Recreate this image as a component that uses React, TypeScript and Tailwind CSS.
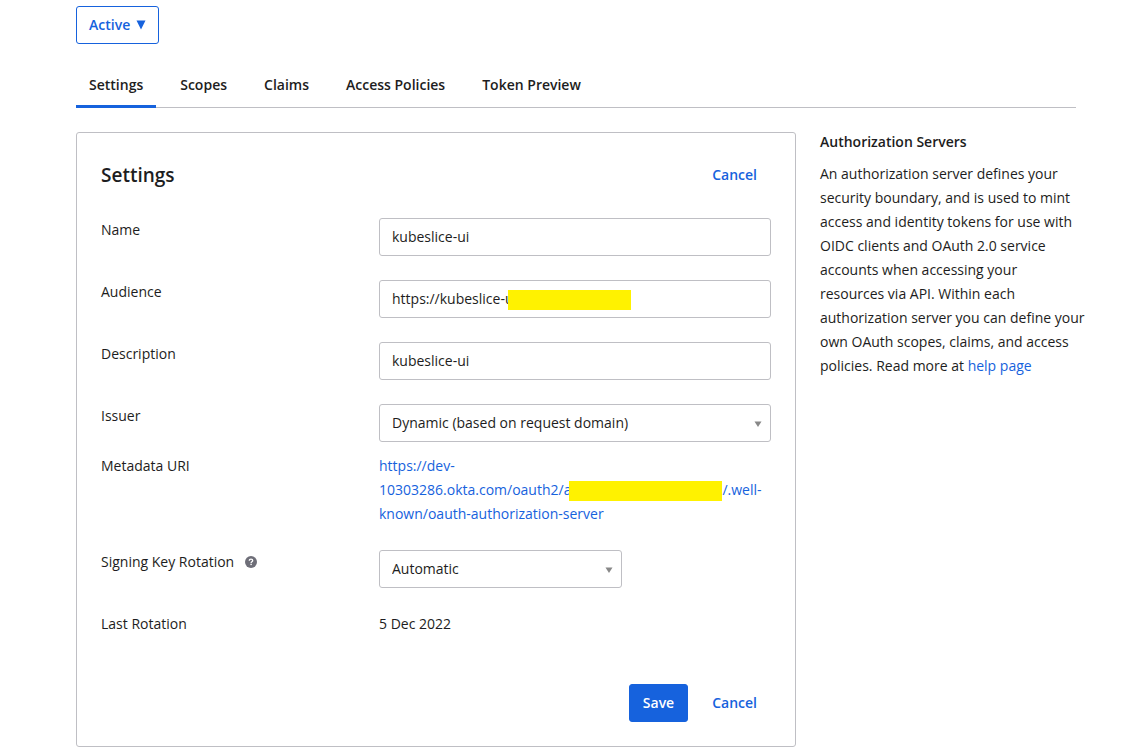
import { useState, type ReactNode } from 'react'

const TABS = ['Settings', 'Scopes', 'Claims', 'Access Policies', 'Token Preview']

const inputCls = 'block w-full h-[38px] rounded-[3px] border border-[#bfbfc4] bg-white px-3 text-sm text-[#1d1d21] outline-none focus:border-[#1662dd]'
const linkBtnCls = 'h-[38px] rounded-[3px] border border-transparent px-[13px] text-sm font-semibold text-[#1662dd] hover:underline'

function Row({ label, htmlFor, help, children }: { label: string; htmlFor?: string; help?: boolean; children: ReactNode }) {
  return (
    <div className="flex items-start">
      <div className="w-[278px] shrink-0 flex items-center gap-[11px] text-sm leading-6">
        {htmlFor ? <label htmlFor={htmlFor}>{label}</label> : <span>{label}</span>}
        {help && (
          <button type="button" aria-label="Help" className="shrink-0">
            <svg width="12" height="12" viewBox="0 0 12 12" className="block" aria-hidden="true">
              <circle cx="6" cy="6" r="6" fill="#6e6e78" />
              <path d="M4.3 4.7c0-1 .7-1.6 1.7-1.6s1.7.6 1.7 1.4c0 1.2-1.6 1.2-1.6 2.4" fill="none" stroke="#fff" strokeWidth="1.3" />
              <rect x="5.4" y="7.7" width="1.4" height="1.4" fill="#fff" />
            </svg>
          </button>
        )}
      </div>
      <div className="min-w-0 flex-1">{children}</div>
    </div>
  )
}

function Select({ id, options, className = '' }: { id: string; options: string[]; className?: string }) {
  return (
    <div className={`relative ${className}`}>
      <select id={id} className={`${inputCls} appearance-none pr-8`}>
        {options.map(o => <option key={o}>{o}</option>)}
      </select>
      <svg width="8" height="6" viewBox="0 0 8 6" className="pointer-events-none absolute right-[9px] top-[17px]" aria-hidden="true">
        <path d="M0.5 0.5h7L4 6z" fill="#888888" />
      </svg>
    </div>
  )
}

export default function App() {
  const [tab, setTab] = useState('Settings')

  return (
    <div className="bg-white pt-1.5 pb-2 pl-[76px] pr-14 text-sm text-[#1d1d21] font-['Open_Sans','Liberation_Sans',sans-serif]">
      <button type="button" className="flex h-[38px] items-center gap-1.5 rounded-[3px] border border-[#1662dd] px-3 text-sm font-semibold text-[#1662dd]">
        Active
        <svg width="10" height="10" viewBox="0 0 10 10" aria-hidden="true">
          <path d="M0.5 0.5h9L5 9.5z" fill="#1662dd" />
        </svg>
      </button>

      <div role="tablist" className="mt-5 flex gap-[11px] border-b border-[#bfbfc4]">
        {TABS.map(t => (
          <button
            key={t}
            type="button"
            role="tab"
            aria-selected={t === tab}
            onClick={() => setTab(t)}
            className={`-mb-px h-11 border-b-[3px] px-[13px] text-sm font-semibold ${t === tab ? 'border-[#1662dd]' : 'border-transparent'}`}
          >
            {t}
          </button>
        ))}
      </div>

      <div className="mt-6 flex items-start gap-6">
        <form className="min-w-0 flex-1 rounded-[3px] border border-[#bfbfc4] p-6" onSubmit={e => e.preventDefault()}>
          <div className="mb-[26px] flex h-[35px] items-center justify-between">
            <h2 className="text-[19px] leading-6 font-semibold">Settings</h2>
            <button type="button" className={linkBtnCls}>Cancel</button>
          </div>

          <div className="space-y-6">
            <Row label="Name" htmlFor="name">
              <input id="name" className={`${inputCls} pb-0.5`} defaultValue="kubeslice-ui" />
            </Row>
            <Row label="Audience" htmlFor="audience">
              <div className="relative">
                <input id="audience" className={`${inputCls} pb-0.5`} defaultValue="https://kubeslice-u" />
                <span className="absolute left-[129px] top-2.5 h-5 w-[123px] bg-[#fff200]" />
              </div>
            </Row>
            <Row label="Description" htmlFor="description">
              <input id="description" className={`${inputCls} pb-0.5`} defaultValue="kubeslice-ui" />
            </Row>
            <div className="space-y-3">
              <Row label="Issuer" htmlFor="issuer">
                <Select id="issuer" options={['Dynamic (based on request domain)']} />
              </Row>
              <Row label="Metadata URI">
                <a href="#metadata" className="block leading-6 text-[#1662dd]">
                  https://dev-<br />
                  <span className="whitespace-nowrap">
                    10303286.okta.com/oauth2/a<span className="-ml-0.5 inline-block h-5 w-[153px] bg-[#fff200] align-middle" />/.well-
                  </span><br />
                  known/oauth-authorization-server
                </a>
              </Row>
            </div>
            <Row label="Signing Key Rotation" htmlFor="rotation" help>
              <Select id="rotation" options={['Automatic', 'Manual']} className="w-[243px]" />
            </Row>
            <Row label="Last Rotation">
              <p className="leading-6">5 Dec 2022</p>
            </Row>
          </div>

          <div className="mt-12 flex justify-end gap-2.5">
            <button type="submit" className="h-[38px] rounded-[3px] border border-[#1662dd] bg-[#1662dd] px-[13px] text-sm font-semibold text-white">Save</button>
            <button type="button" className={linkBtnCls}>Cancel</button>
          </div>
        </form>

        <aside className="w-64 shrink-0">
          <h3 className="text-sm font-semibold">Authorization Servers</h3>
          <p className="-mr-3 mt-2.5 leading-6">
            An authorization server defines your security boundary, and is used to mint access and identity tokens for use with OIDC clients and OAuth 2.0 service accounts when accessing your<br />
            resources via API. Within each authorization server you can define your own OAuth scopes, claims, and access policies. Read more at <a href="#help" className="text-[#1662dd]">help page</a>
          </p>
        </aside>
      </div>
    </div>
  )
}
